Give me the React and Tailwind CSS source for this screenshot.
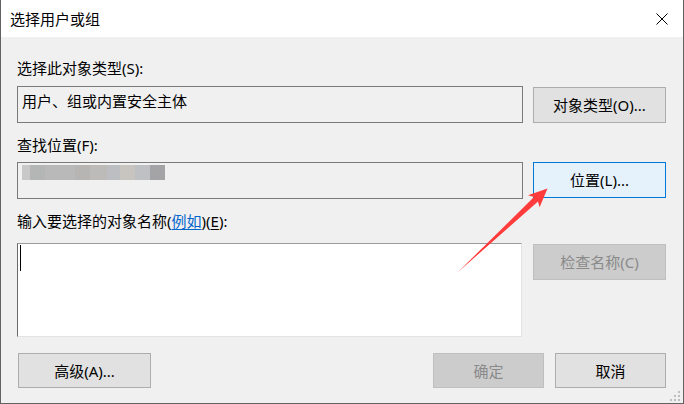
import React from 'react'

const font = "font-['Noto_Sans','Noto_Sans_CJK_SC',sans-serif]"

const Button = ({ children, className = '', variant = 'normal' }) => {
    const look = {
        normal: 'bg-[#e1e1e1] border-[#adadad] text-black',
        focus: 'bg-[#e5f1fb] border-[#0078d7] text-black',
        disabled: 'bg-[#cccccc] border-[#bfbfbf] text-[#8a8a8a]',
    }[variant]
    return (
        <div className={`flex items-center justify-center border text-[15px] leading-[20px] ${look} ${className}`}>
            {children}
        </div>
    )
}

const blurBlocks = [
    ['w-[8px]', 'bg-[#c8c8c8]'],
    ['w-[15px]', 'bg-[#b4b6b6]'],
    ['w-[30px]', 'bg-[#b9b9b9]'],
    ['w-[15px]', 'bg-[#b6b5b3]'],
    ['w-[17px]', 'bg-[#bcbbb9]'],
    ['w-[13px]', 'bg-[#bdbec2]'],
    ['w-[15px]', 'bg-[#c8c5c0]'],
    ['w-[15px]', 'bg-[#bfc0c3]'],
    ['w-[15px]', 'bg-[#a4a4a6]'],
]

export default function App() {
    return (
        <div className={`relative w-[684px] h-[404px] overflow-hidden bg-[#f0f0f0] border-x border-b border-[#626262] flex flex-col ${font} text-black`}>
            {/* title bar */}
            <div className="h-[37px] bg-white flex items-center justify-between pl-[9px] pr-[15px] shrink-0">
                <span className="text-[15px] leading-[20px]">选择用户或组</span>
                <svg width="12" height="12" viewBox="0 0 12 12">
                    <path d="M0.5 0.5 L11.5 11.5 M11.5 0.5 L0.5 11.5" stroke="#000" strokeWidth="1" />
                </svg>
            </div>

            <div className="flex flex-col pl-[16px] pr-[17px]">
                <div className="mt-[21px] h-[20px] text-[15px] leading-[20px]">选择此对象类型(S):</div>
                <div className="mt-[8px] flex gap-[10px]">
                    <div className="w-[506px] h-[37px] border border-[#7a7a7a] pl-[4px] pt-[4px] text-[15px] leading-[20px]">
                        用户、组或内置安全主体
                    </div>
                    <Button className="w-[133px] h-[36px] mt-[1px]">对象类型(O)...</Button>
                </div>

                <div className="mt-[12px] h-[20px] text-[15px] leading-[20px]">查找位置(F):</div>
                <div className="mt-[7px] flex gap-[10px]">
                    <div className="relative w-[506px] h-[37px] border border-[#7a7a7a] pl-[4px] pt-[2px]">
                        <div className="flex h-[15px] blur-[0.6px]">
                            {blurBlocks.map(([w, bg], i) => (
                                <div key={i} className={`${w} h-full ${bg}`} />
                            ))}
                        </div>
                    </div>
                    <Button variant="focus" className="w-[133px] h-[36px]">位置(L)...</Button>
                </div>

                <div className="mt-[12px] h-[20px] text-[15px] leading-[20px]">
                    输入要选择的对象名称(<span className="text-[#0066cc] underline underline-offset-2">例如</span>)(<span className="underline underline-offset-2">E</span>):
                </div>
                <div className="mt-[12px] flex justify-between">
                    <div className="w-[505px] h-[94px] bg-white border border-t-[#9a9a9a] border-l-[#6a6a6a] border-r-[#e3e3e3] border-b-[#e3e3e3]">
                        <div className="ml-[2px] mt-[1px] w-[1px] h-[26px] bg-black" />
                    </div>
                    <Button variant="disabled" className="w-[133px] h-[36px] mt-[1px]">检查名称(C)</Button>
                </div>

                <div className="mt-[16px] flex">
                    <Button className="ml-[1px] w-[133px] h-[35px]">高级(A)...</Button>
                    <div className="ml-auto flex gap-[11px]">
                        <Button variant="disabled" className="w-[111px] h-[35px]">确定</Button>
                        <Button className="w-[111px] h-[35px]">取消</Button>
                    </div>
                </div>
            </div>

            {/* size grip */}
            <svg className="absolute right-[2px] bottom-[1px]" width="12" height="12" viewBox="0 0 12 12">
                <g fill="#bdbdbd">
                    <rect x="9" y="1" width="2" height="2" />
                    <rect x="5" y="5" width="2" height="2" />
                    <rect x="9" y="5" width="2" height="2" />
                    <rect x="1" y="9" width="2" height="2" />
                    <rect x="5" y="9" width="2" height="2" />
                    <rect x="9" y="9" width="2" height="2" />
                </g>
            </svg>

            {/* red annotation arrow */}
            <svg className="absolute left-0 top-0 pointer-events-none" width="684" height="404" viewBox="0 0 684 404">
                <polygon
                    points="456.5,272.5 533,197 527,195.3 546.5,188.5 538.6,207.3 537,201.5"
                    fill="#ff3b3b"
                />
            </svg>
        </div>
    )
}
